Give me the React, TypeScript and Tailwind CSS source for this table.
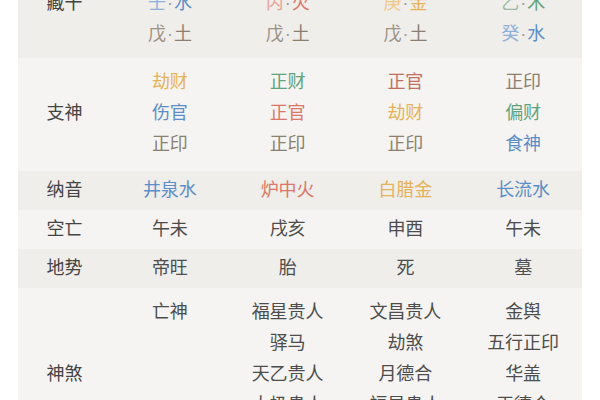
import React from 'react';

type Cell = { t: string; c: string };

const BLUE = 'text-[#5b8dc8]';
const BLUE_L = 'text-[#8eb1da]';
const RED = 'text-[#dc7668]';
const RED_L = 'text-[#eba295]';
const GOLD = 'text-[#e6b258]';
const GOLD_L = 'text-[#efc98a]';
const GREEN = 'text-[#62a37f]';
const GREEN_L = 'text-[#9bb9a6]';
const BROWN = 'text-[#8b7f70]';
const BROWN_L = 'text-[#9d9284]';
const GRAY = 'text-[#4d4d4d]';

// 藏干: stem char lighter, element char stronger
const Gan = ({ a, b, ca, cb }: { a: string; b: string; ca: string; cb: string }) => (
    <div className="h-[31px] leading-[31px]">
        <span className={ca}>{a}</span>
        <span className="font-['Liberation_Sans',sans-serif] text-[#9a9a9a] px-[1px]">·</span>
        <span className={cb}>{b}</span>
    </div>
);

const Line = ({ cell }: { cell: Cell }) => (
    <div className={`h-[31px] leading-[31px] ${cell.c}`}>{cell.t}</div>
);

const Row = ({ label, dark, pad, children }: any) => (
    <div className={`grid grid-cols-[93px_repeat(4,1fr)] ${dark ? 'bg-[#efeeeb]' : 'bg-[#f5f4f2]'} ${pad}`}>
        <div className="flex items-center justify-center text-[#444]">{label}</div>
        {children}
    </div>
);

const Col = ({ cells }: { cells: Cell[] }) => (
    <div className="flex flex-col items-center justify-center text-center">
        {cells.map((c, i) => <Line key={i} cell={c} />)}
    </div>
);

export default function App() {
    const zhiShen: Cell[][] = [
        [{ t: '劫财', c: GOLD }, { t: '伤官', c: BLUE }, { t: '正印', c: BROWN }],
        [{ t: '正财', c: GREEN }, { t: '正官', c: RED }, { t: '正印', c: BROWN }],
        [{ t: '正官', c: 'text-[#c06f63]' }, { t: '劫财', c: GOLD }, { t: '正印', c: BROWN }],
        [{ t: '正印', c: BROWN }, { t: '偏财', c: GREEN }, { t: '食神', c: BLUE }],
    ];
    const naYin: Cell[] = [
        { t: '井泉水', c: BLUE }, { t: '炉中火', c: RED }, { t: '白腊金', c: GOLD }, { t: '长流水', c: BLUE },
    ];
    const kongWang = ['午未', '戌亥', '申酉', '午未'];
    const diShi = ['帝旺', '胎', '死', '墓'];
    const shenSha = [
        ['亡神'],
        ['福星贵人', '驿马', '天乙贵人', '太极贵人', '天德贵人'],
        ['文昌贵人', '劫煞', '月德合', '福星贵人'],
        ['金舆', '五行正印', '华盖', '天德合'],
    ];

    return (
        <div className="w-[600px] h-[400px] overflow-hidden bg-white px-[18px] text-[18px] font-['Noto_Sans_CJK_SC','Noto_Sans',sans-serif]">
            <div className="-mt-[52px] flex flex-col">
                {/* 藏干 */}
                <Row label="藏干" dark pad="pt-[7px] pb-[10px]">
                    <div className="flex flex-col items-center">
                        <Gan a="癸" b="水" ca={BLUE_L} cb={BLUE} />
                        <Gan a="壬" b="水" ca={BLUE_L} cb={BLUE} />
                        <Gan a="戊" b="土" ca={BROWN_L} cb={BROWN} />
                    </div>
                    <div className="flex flex-col items-center">
                        <Gan a="丁" b="火" ca={RED_L} cb={RED} />
                        <Gan a="丙" b="火" ca={RED_L} cb={RED} />
                        <Gan a="戊" b="土" ca={BROWN_L} cb={BROWN} />
                    </div>
                    <div className="flex flex-col items-center">
                        <Gan a="辛" b="金" ca={GOLD_L} cb={GOLD} />
                        <Gan a="庚" b="金" ca={GOLD_L} cb={GOLD} />
                        <Gan a="戊" b="土" ca={BROWN_L} cb={BROWN} />
                    </div>
                    <div className="flex flex-col items-center">
                        <Gan a="甲" b="木" ca={GREEN_L} cb={GREEN} />
                        <Gan a="乙" b="木" ca={GREEN_L} cb={GREEN} />
                        <Gan a="癸" b="水" ca={BLUE_L} cb={BLUE} />
                    </div>
                </Row>

                {/* 支神 */}
                <Row label="支神" pad="pt-[7px] pb-[13px]">
                    {zhiShen.map((col, i) => <Col key={i} cells={col} />)}
                </Row>

                <Row label="纳音" dark pad="pt-[2px] pb-[6px]">
                    {naYin.map((c, i) => <Col key={i} cells={[c]} />)}
                </Row>

                <Row label="空亡" pad="pt-[2px] pb-[6px]">
                    {kongWang.map((t, i) => <Col key={i} cells={[{ t, c: GRAY }]} />)}
                </Row>

                <Row label="地势" dark pad="pt-[2px] pb-[6px]">
                    {diShi.map((t, i) => <Col key={i} cells={[{ t, c: GRAY }]} />)}
                </Row>

                {/* 神煞 */}
                <Row label="神煞" pad="pt-[7px] pb-[13px]">
                    {shenSha.map((col, i) => (
                        <div key={i} className="flex flex-col items-center text-center">
                            {col.map((t, j) => <Line key={j} cell={{ t, c: GRAY }} />)}
                        </div>
                    ))}
                </Row>
            </div>
        </div>
    );
}
